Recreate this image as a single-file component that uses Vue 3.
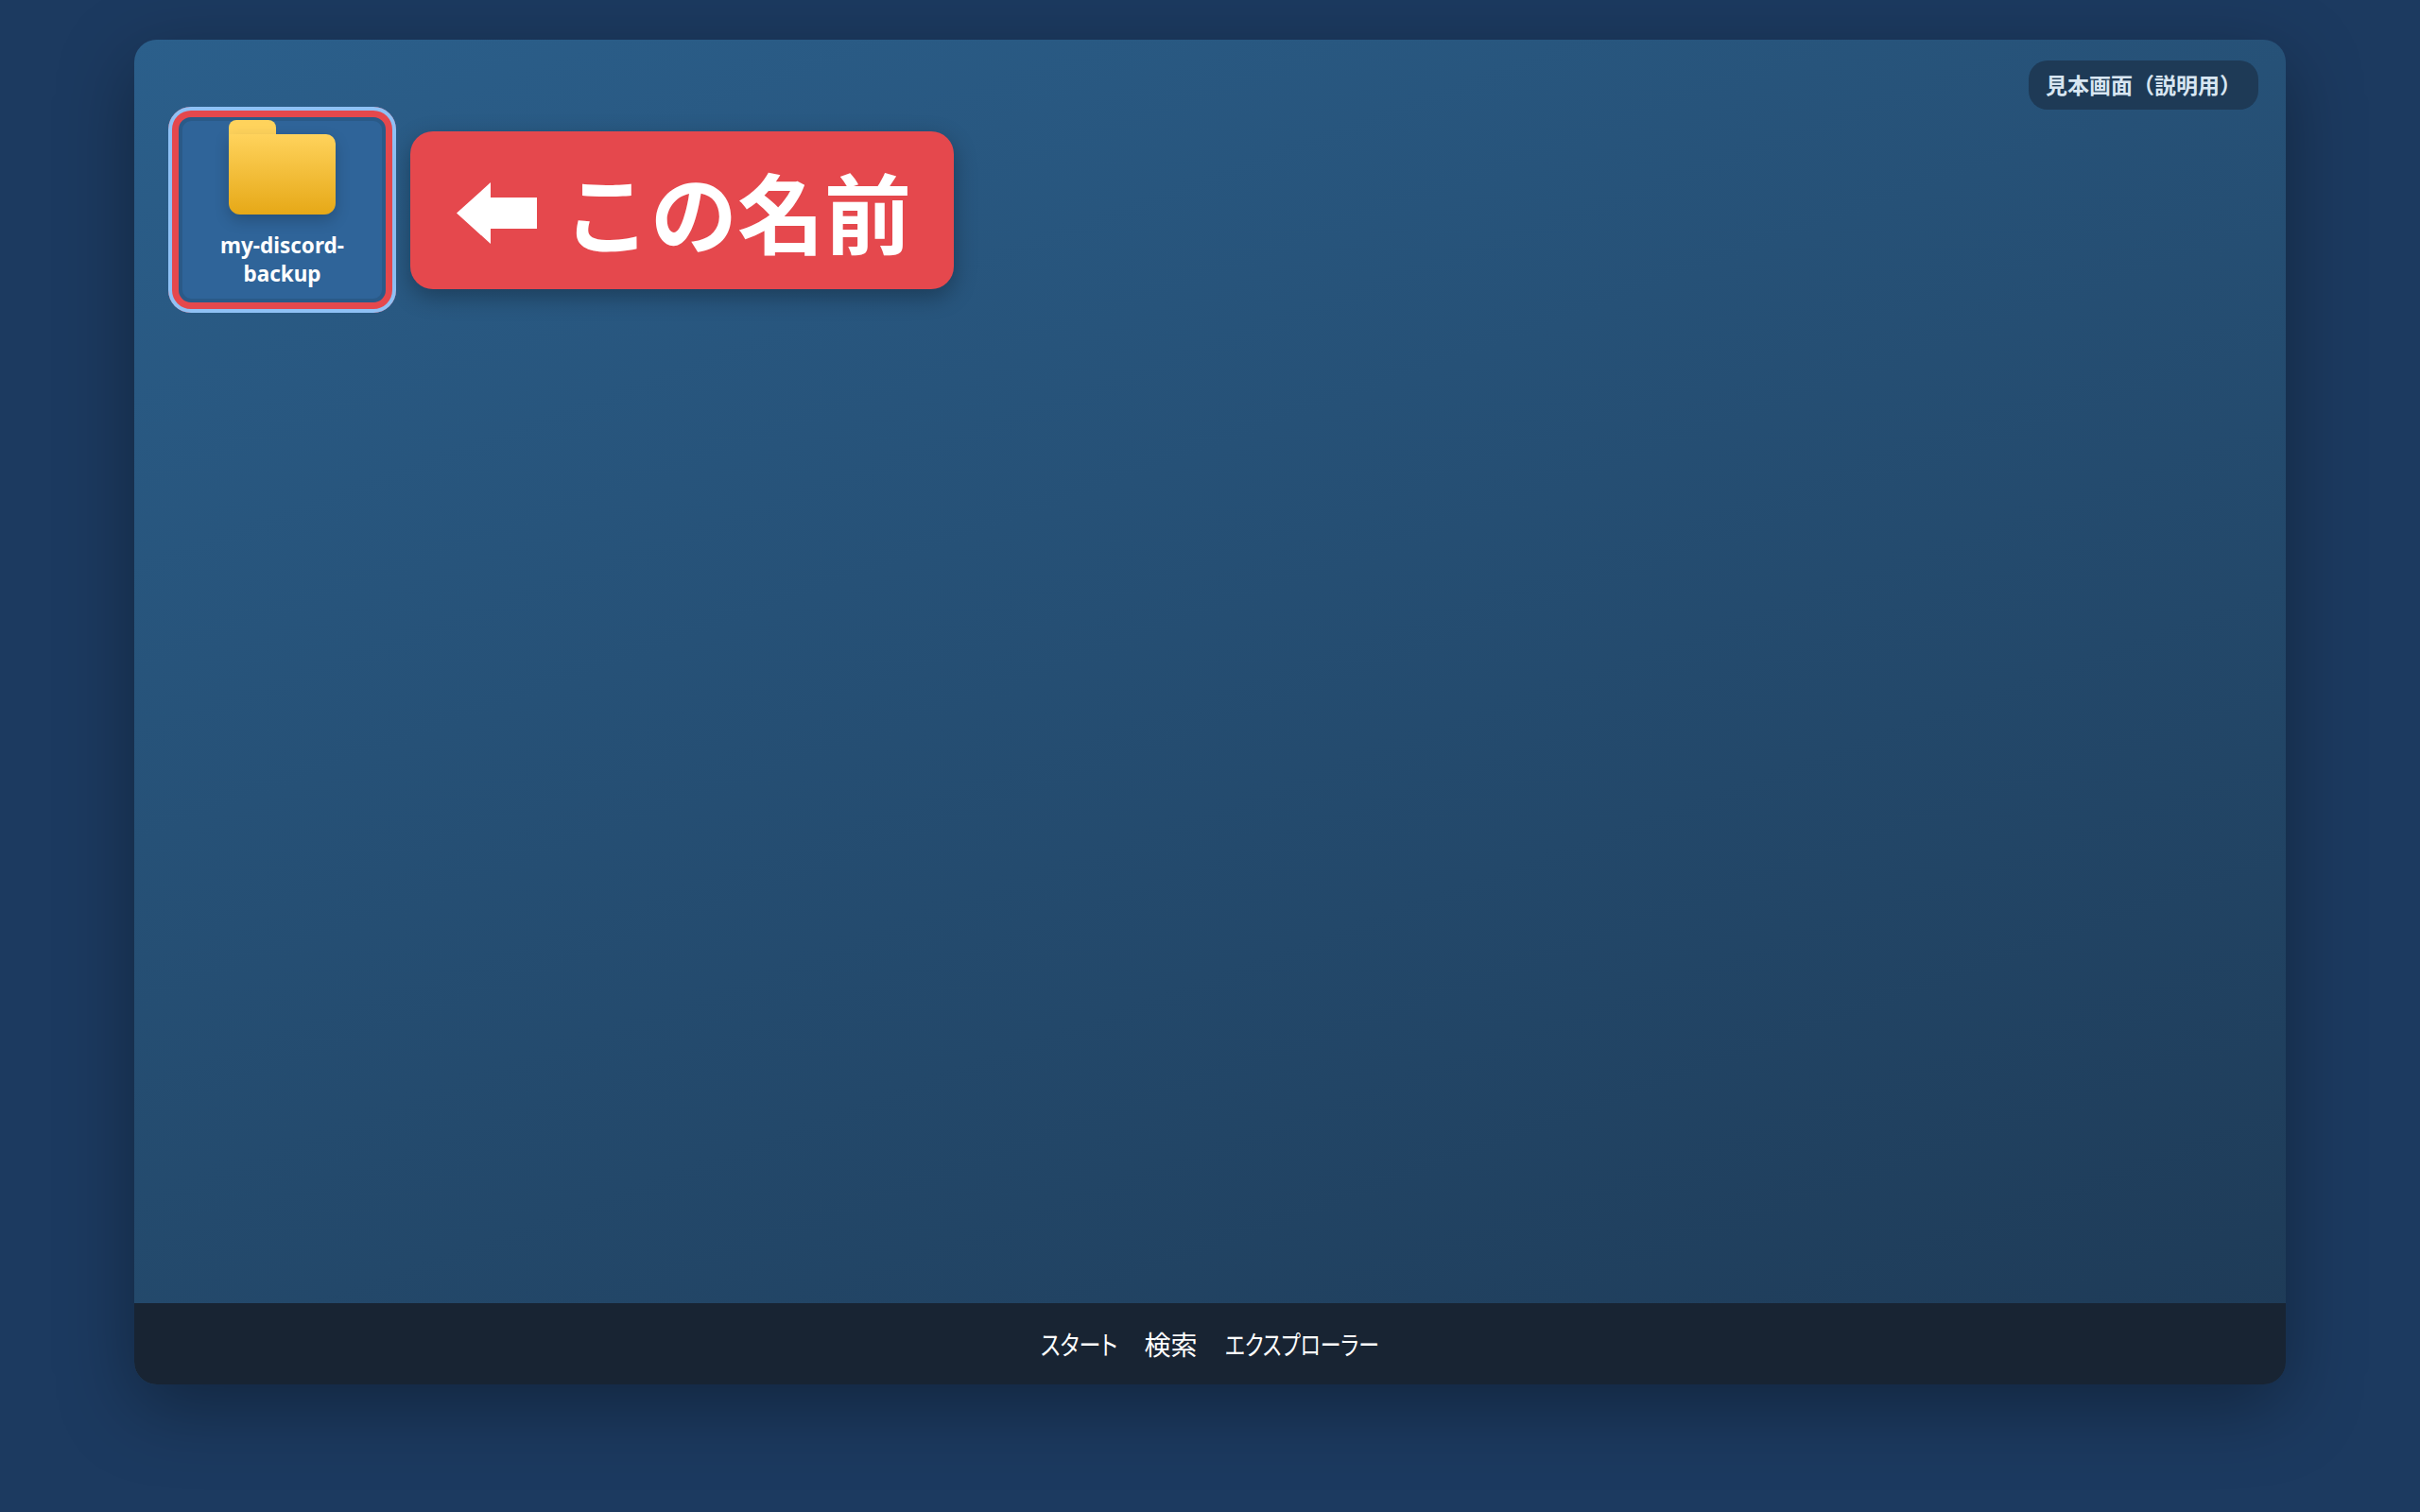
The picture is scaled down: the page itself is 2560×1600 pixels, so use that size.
<script setup>
const taskItems = [
  { label: 'スタート', kind: 'kata-short' },
  { label: '検索', kind: '' },
  { label: 'エクスプローラー', kind: 'kata-long' },
]
</script>

<template>
  <div class="page">
    <section class="desktop">
      <div class="badge">見本画面（説明用）</div>
      <main class="workspace">
        <div class="row">
          <div class="item">
            <div class="folder">
              <span class="tab"></span>
              <span class="body"></span>
            </div>
            <div class="name">my-discord-<br />backup</div>
          </div>
          <div class="callout">
            <svg class="arrow" viewBox="0 0 85 65" width="85" height="65" aria-label="←">
              <polygon points="0,32.5 36,0 36,16 85,16 85,49 36,49 36,65" fill="#fff" />
            </svg>
            <span>この名前</span>
          </div>
        </div>
      </main>
      <footer class="taskbar">
        <span v-for="t in taskItems" :key="t.label" :class="t.kind">{{ t.label }}</span>
      </footer>
    </section>
  </div>
</template>

<style>
html, body { margin: 0; background: #1c3a60; }
</style>

<style scoped>
.page {
  box-sizing: border-box;
  height: 1600px;
  padding: 42px 142px 135px;
  background: #1c3a60;
  font-family: "Noto Sans CJK JP", "Noto Sans", sans-serif;
}
.desktop {
  position: relative;
  height: 100%;
  display: flex;
  flex-direction: column;
  border-radius: 24px;
  background: linear-gradient(160deg, #2b5f8b 0%, #1e3a56 100%);
  box-shadow: 0 24px 80px rgba(0, 0, 0, 0.35);
}
.workspace {
  flex: 1;
  padding: 71px 36px 0;
}
.row {
  display: flex;
  align-items: center;
  gap: 15px;
}
.item {
  box-sizing: border-box;
  width: 241px;
  height: 218px;
  flex: none;
  display: flex;
  flex-direction: column;
  align-items: center;
  padding: 14px 0 0;
  border-radius: 24px;
  background: #2f6499;
  box-shadow: inset 0 0 0 4px #8fc1f5, inset 0 0 0 11px #e5484d, inset 0 0 0 15px #2a5a88;
}
.folder {
  position: relative;
  width: 113px;
  height: 100px;
  flex: none;
}
.tab {
  position: absolute;
  left: 0;
  top: 0;
  width: 50px;
  height: 30px;
  border-radius: 8px 8px 0 0;
  background: #ffd35c;
}
.body {
  position: absolute;
  left: 0;
  right: 0;
  top: 15px;
  bottom: 0;
  border-radius: 0 10px 12px 12px;
  background: linear-gradient(180deg, #ffd35c 0%, #e6a817 100%);
  box-shadow: 0 6px 16px rgba(0, 0, 0, 0.2);
}
.name {
  margin-top: 18px;
  color: #fff;
  font-family: "Noto Sans", sans-serif;
  font-weight: 700;
  font-size: 22.5px;
  line-height: 30px;
  text-align: center;
}
.callout {
  box-sizing: border-box;
  width: 575px;
  height: 167px;
  flex: none;
  display: flex;
  align-items: center;
  gap: 28px;
  padding-left: 49px;
  border-radius: 24px;
  background: #e5484d;
  box-shadow: 0 8px 24px rgba(0, 0, 0, 0.3);
  color: #fff;
  font-weight: 700;
  font-size: 92px;
  line-height: 1;
  white-space: nowrap;
}
.arrow {
  flex: none;
  margin-top: 6px;
}
.badge {
  position: absolute;
  top: 22px;
  right: 29px;
  padding: 0 18px;
  height: 52px;
  line-height: 50px;
  border-radius: 20px;
  background: #1e3a56;
  color: #d8e6f2;
  font-weight: 700;
  font-size: 23px;
}
.taskbar {
  flex: none;
  height: 86px;
  display: flex;
  align-items: center;
  justify-content: center;
  gap: 29px;
  border-radius: 0 0 24px 24px;
  background: #182433;
  color: #fff;
  font-size: 28px;
  font-weight: 400;
  font-feature-settings: "palt";
}
.kata-short,
.kata-long {
  display: inline-block;
  transform-origin: left center;
}
.kata-short {
  transform: scaleX(0.82);
  margin-right: -18px;
}
.kata-long {
  transform: scaleX(0.78);
  margin-right: -45px;
}
</style>
